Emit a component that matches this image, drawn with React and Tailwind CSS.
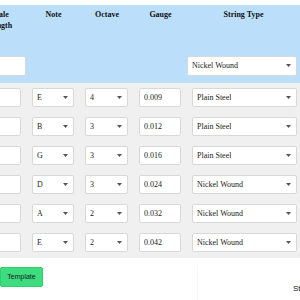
import React from 'react';

const strings = [
  { note: 'E', octave: '4', gauge: '0.009', type: 'Plain Steel' },
  { note: 'B', octave: '3', gauge: '0.012', type: 'Plain Steel' },
  { note: 'G', octave: '3', gauge: '0.016', type: 'Plain Steel' },
  { note: 'D', octave: '3', gauge: '0.024', type: 'Nickel Wound' },
  { note: 'A', octave: '2', gauge: '0.032', type: 'Nickel Wound' },
  { note: 'E', octave: '2', gauge: '0.042', type: 'Nickel Wound' },
];

const Caret = () => (
  <svg width="5" height="3" viewBox="0 0 5 3" className="shrink-0">
    <path d="M0 0h5L2.5 3z" fill="#555" />
  </svg>
);

// fake select, native arrows look different
const Select = ({ value, className }) => (
  <div className={`flex h-[19.5px] shrink-0 items-center justify-between rounded-[2px] border border-[#d8d8d8] bg-white pl-[4px] pr-[5px] ${className}`}>
    <span className="truncate">{value}</span>
    <Caret />
  </div>
);

const Field = ({ value, className }) => (
  <input
    readOnly
    value={value}
    className={`h-[19.5px] shrink-0 rounded-[2px] border border-[#d8d8d8] bg-white px-[4px] text-[8px] outline-none ${className}`}
  />
);

export default function App() {
  return (
    <div className="h-[300px] w-[300px] overflow-hidden bg-white font-['Liberation_Serif',serif] text-[8px] text-[#222]">
      <div className="h-[5px]" />

      {/* Header */}
      <div className="h-[78px] bg-[#bbdefb] pt-[4px]">
        <div className="ml-[-27px] flex h-[47px] text-center font-bold leading-[11px] text-[#111]">
          <div className="w-[54px] shrink-0 px-[8px]">Scale Length</div>
          <div className="w-[53px] shrink-0">Note</div>
          <div className="w-[54px] shrink-0">Octave</div>
          <div className="w-[53px] shrink-0">Gauge</div>
          <div className="w-[113px] shrink-0">String Type</div>
        </div>
        <div className="flex">
          <Field value="" className="ml-[-27px] w-[53px]" />
          <Select value="Nickel Wound" className="ml-[161px] w-[110px]" />
        </div>
      </div>

      {/* Rows */}
      <div className="bg-[#f0f0f0] pb-[1px]">
        {strings.map((s, i) => (
          <div key={i} className="ml-[-21px] flex h-[29px] items-center gap-[11px]">
            <Field value="" className="w-[42px]" />
            <Select value={s.note} className="w-[42px]" />
            <Select value={s.octave} className="w-[43px]" />
            <Field value={s.gauge} className="w-[42px]" />
            <Select value={s.type} className="w-[105px]" />
          </div>
        ))}
      </div>

      {/* Footer */}
      <div className="flex">
        <div className="w-[197px] shrink-0 pt-[9px]">
          <button className="flex h-[20px] w-[43px] items-center justify-center rounded-[2px] border border-[#2fcf6e] bg-[#3ddc7e] font-['Liberation_Sans',sans-serif] text-[7px] text-[#1a1a1a]">
            Template
          </button>
        </div>
        <div className="mt-[7px] h-[40px] flex-1 whitespace-nowrap border-l border-[#f7f7f7] pl-[95px] pt-[19px] font-['Liberation_Sans',sans-serif] text-[8px] leading-[10px] text-[#222]">
          Strings: 6
        </div>
      </div>
    </div>
  );
}
